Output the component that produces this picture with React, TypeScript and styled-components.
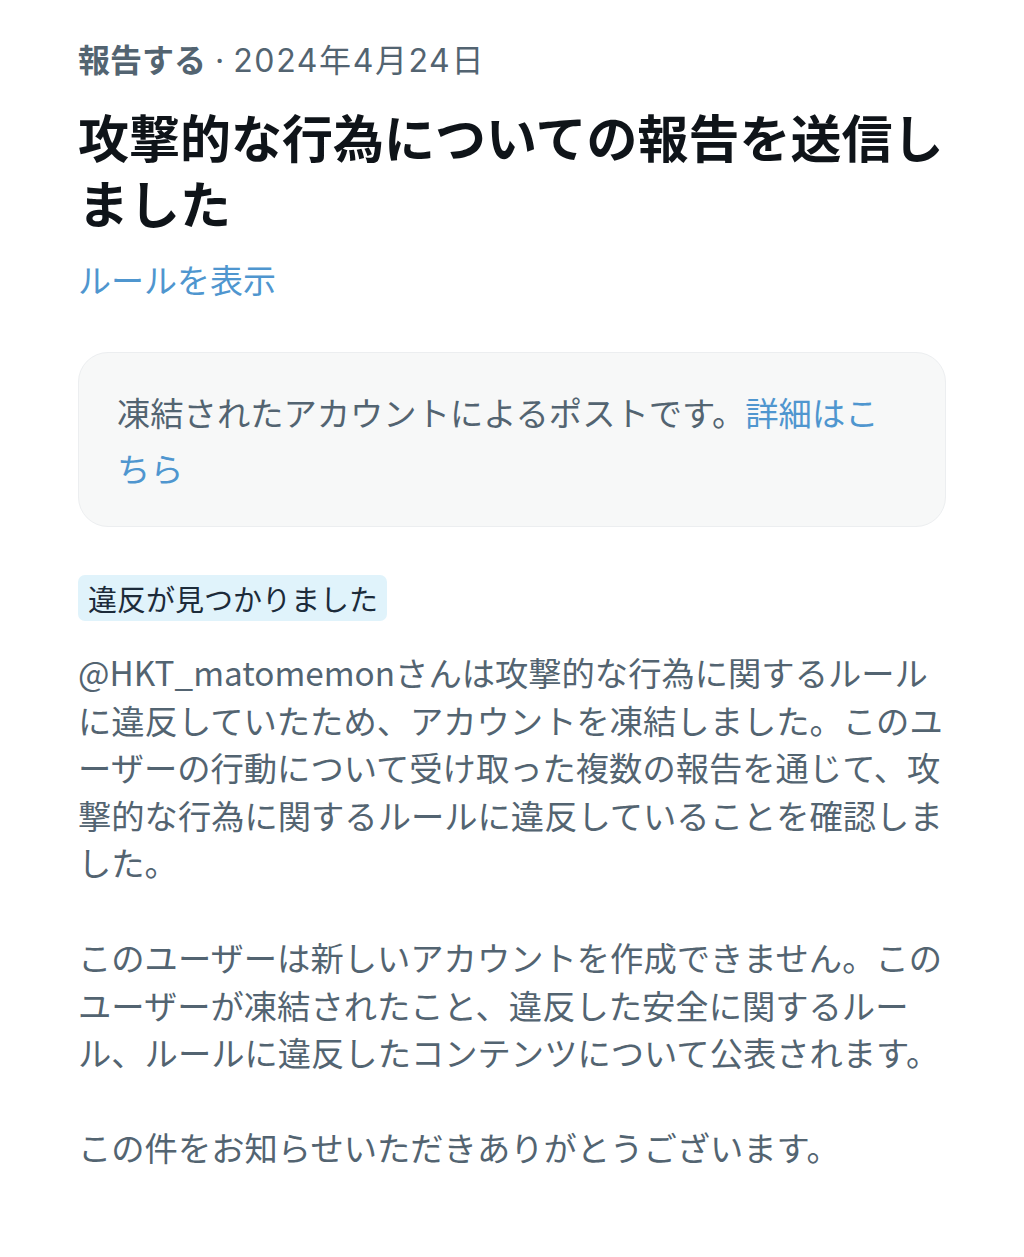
import { createGlobalStyle, styled } from "styled-components";

const GlobalStyle = createGlobalStyle`
  html, body {
    margin: 0;
    padding: 0;
    background: #ffffff;
  }
  body {
    font-family: "Noto Sans CJK JP", "Noto Sans", sans-serif;
  }
`;

const Page = styled.main`
  padding: 38px 78px 60px 78px;
  display: flex;
  flex-direction: column;
  align-items: flex-start;
`;

const Meta = styled.div`
  font-family: Inter, "Noto Sans CJK JP", sans-serif;
  font-size: 32px;
  line-height: 40px;
  color: #536471;
  white-space: nowrap;
`;

const MetaStrong = styled.span`
  font-family: "Noto Sans CJK JP", sans-serif;
  font-weight: 700;
`;

const MetaDate = styled.span`
  letter-spacing: 1.6px;
`;

const Title = styled.h1`
  margin: 22px 0 0 0;
  font-size: 51px;
  line-height: 66px;
  font-weight: 700;
  color: #0f1419;
  white-space: nowrap;
`;

const RuleLink = styled.a`
  margin-top: 22px;
  font-size: 33px;
  line-height: 44px;
  color: #4f96cf;
  text-decoration: none;
`;

const NoticeCard = styled.div`
  box-sizing: border-box;
  align-self: stretch;
  margin-top: 51px;
  padding: 31px 38px 30px 38px;
  background: #f7f8f8;
  border: 1.5px solid #eceef0;
  border-radius: 30px;
  font-size: 33.3px;
  line-height: 56px;
  color: #536471;
  white-space: nowrap;
`;

const InlineLink = styled.span`
  color: #4f96cf;
`;

const Badge = styled.span`
  margin-top: 48px;
  padding: 0 9px 0 10px;
  height: 46px;
  display: inline-flex;
  align-items: center;
  background: #e0f3fb;
  border-radius: 7px;
  font-size: 29px;
  color: #1c2b3a;
`;

const Body = styled.div`
  margin-top: 27px;
  display: flex;
  flex-direction: column;
  gap: 47.5px;
  font-size: 33.3px;
  line-height: 47.5px;
  color: #536471;
  white-space: nowrap;
`;

const Paragraph = styled.p`
  margin: 0;
`;

export default function App() {
  return (
    <>
      <GlobalStyle />
      <Page>
        <Meta>
          <MetaStrong>報告する</MetaStrong> · <MetaDate>2024年4月24日</MetaDate>
        </Meta>
        <Title>
          攻撃的な行為についての報告を送信し
          <br />
          ました
        </Title>
        <RuleLink href="#">ルールを表示</RuleLink>
        <NoticeCard>
          凍結されたアカウントによるポストです。<InlineLink>詳細はこ</InlineLink>
          <br />
          <InlineLink>ちら</InlineLink>
        </NoticeCard>
        <Badge>違反が見つかりました</Badge>
        <Body>
          <Paragraph>
            @HKT_matomemonさんは攻撃的な行為に関するルール
            <br />
            に違反していたため、アカウントを凍結しました。このユ
            <br />
            ーザーの行動について受け取った複数の報告を通じて、攻
            <br />
            撃的な行為に関するルールに違反していることを確認しま
            <br />
            した。
          </Paragraph>
          <Paragraph>
            このユーザーは新しいアカウントを作成できません。この
            <br />
            ユーザーが凍結されたこと、違反した安全に関するルー
            <br />
            ル、ルールに違反したコンテンツについて公表されます。
          </Paragraph>
          <Paragraph>この件をお知らせいただきありがとうございます。</Paragraph>
        </Body>
      </Page>
    </>
  );
}
